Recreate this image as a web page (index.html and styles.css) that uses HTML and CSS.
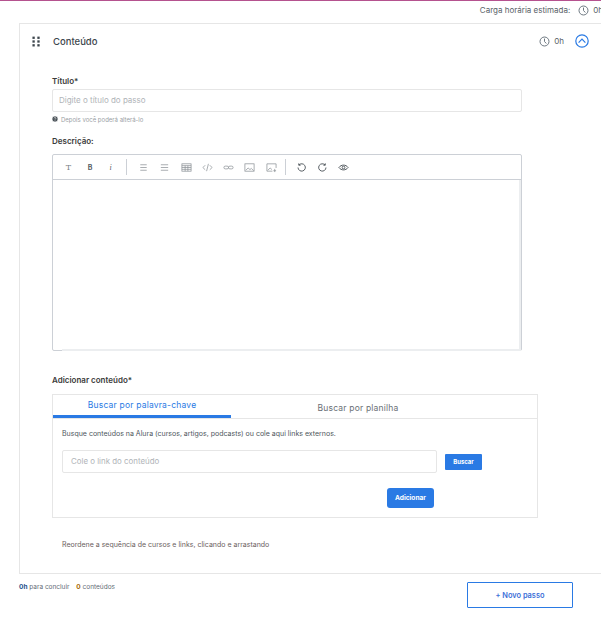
FILE: index.html
```html
<!DOCTYPE html>
<html lang="pt-BR">
<head>
<meta charset="utf-8">
<title>Conteúdo</title>
<link rel="stylesheet" href="styles.css">
</head>
<body>
<div class="page">
  <div class="estimate">
    <span>Carga horária estimada:</span>
    <svg class="clock" viewBox="0 0 12 12"><circle cx="6" cy="6" r="4.9"/><path d="M6 2.8V6l2 2.2"/></svg>
    <span>0h</span>
  </div>
  <section class="card">
    <header class="card-head">
      <svg class="grip" viewBox="0 0 9 12"><rect x="0.5" y="0.5" width="2.6" height="2.6"/><rect x="6" y="0.5" width="2.6" height="2.6"/><rect x="0.5" y="4.7" width="2.6" height="2.6"/><rect x="6" y="4.7" width="2.6" height="2.6"/><rect x="0.5" y="9" width="2.6" height="2.6"/><rect x="6" y="9" width="2.6" height="2.6"/></svg>
      <h2 class="card-title">Conteúdo</h2>
      <svg class="clock" viewBox="0 0 12 12"><circle cx="6" cy="6" r="4.9"/><path d="M6 2.8V6l2 2.2"/></svg>
      <span class="card-hours">0h</span>
      <svg class="toggle" viewBox="0 0 14 14"><circle cx="7" cy="7" r="6.2"/><path d="M3.6 8.6 7 5.2l3.4 3.4"/></svg>
    </header>
    <div class="form">
      <label class="label label-title">Título*</label>
      <div class="input">Digite o título do passo</div>
      <p class="hint">
        <svg class="hint-icon" viewBox="0 0 6 6"><circle cx="3" cy="3" r="3"/><path d="M2.1 2.3c0-1.1 1.8-1.1 1.8 0 0 .7-.9.7-.9 1.3M3 4.3v.6"/></svg>
        Depois você poderá alterá-lo
      </p>
      <label class="label label-desc">Descrição:</label>
      <div class="editor">
        <div class="toolbar">
          <span class="tool tool-t">T</span>
          <span class="tool tool-b">B</span>
          <span class="tool tool-i">i</span>
          <span class="sep"></span>
          <svg class="icon" viewBox="0 0 12 12"><path d="M2.5 3h7M2.5 6h7M2.5 9h7"/></svg>
          <svg class="icon" viewBox="0 0 12 12"><path d="M2 3h8M2 6h8M2 9h8"/></svg>
          <svg class="icon" viewBox="0 0 12 12"><rect x="1" y="2" width="10" height="8"/><path d="M1 4h10M1 6h10M1 8h10M4.500 4v6M7.500 4v6"/></svg>
          <svg class="icon" viewBox="0 0 12 12"><path d="M3.500 3.500 1 6l2.500 2.500M8.500 3.500 11 6 8.500 8.500M7 2 5 10"/></svg>
          <svg class="icon" viewBox="0 0 12 12"><rect x="1" y="4.500" width="5" height="3" rx="1.500"/><rect x="6" y="4.500" width="5" height="3" rx="1.500"/></svg>
          <svg class="icon" viewBox="0 0 12 12"><rect x="1" y="2" width="10" height="8"/><path d="m2 9 2.500-2.500 2 1.800L8 7l2.500 2.500"/></svg>
          <svg class="icon" viewBox="0 0 12 12"><path d="M11 6.500V2H1v8h6"/><path d="m2 9 2.500-2.500 2 1.800M9.500 7.500v3.500M8 9.500h3"/></svg>
          <span class="sep sep-2"></span>
          <svg class="icon icon-dark" viewBox="0 0 12 12"><path d="M3.200 3.300A4 4 0 1 1 2.200 6M3 1.500v2h2"/></svg>
          <svg class="icon icon-dark" viewBox="0 0 12 12"><path d="M8.800 3.300A4 4 0 1 0 9.800 6M9 1.500v2H7"/></svg>
          <svg class="icon icon-dark" viewBox="0 0 12 12"><path d="M1 6c2.500-3.500 7.500-3.500 10 0-2.500 3.500-7.500 3.500-10 0Z"/><circle cx="6" cy="6" r="1.500"/></svg>
        </div>
        <div class="editor-body"><div class="editor-area"></div></div>
      </div>
      <label class="label label-add">Adicionar conteúdo*</label>
      <div class="panel">
        <div class="tabs">
          <div class="tab tab-active">Buscar por palavra-chave</div>
          <div class="tab tab-plain">Buscar por planilha</div>
        </div>
        <div class="panel-body">
          <p class="panel-help">Busque conteúdos na Alura (cursos, artigos, podcasts) ou cole aqui links externos.</p>
          <div class="search-row">
            <div class="input input-link">Cole o link do conteúdo</div>
            <button class="btn btn-search">Buscar</button>
          </div>
          <div class="add-row"><button class="btn btn-add">Adicionar</button></div>
        </div>
      </div>
      <p class="reorder">Reordene a sequência de cursos e links, clicando e arrastando</p>
    </div>
  </section>
  <footer class="foot">
    <p class="foot-text"><b class="foot-h">0h</b> para concluir <b class="foot-n">0</b> conteúdos</p>
    <button class="btn-new">+ Novo passo</button>
  </footer>
</div>
</body>
</html>
```
FILE: styles.css
```css
html, body { margin: 0; padding: 0; background: #fff; }
body { font-family: Inter, "Liberation Sans", sans-serif; color: #3d464d; }
.page { width: 601px; height: 623px; overflow: hidden; border-top: 1px solid #b5528f; box-sizing: border-box; }
p, h2 { margin: 0; }
svg { display: block; flex: none; }

.estimate { height: 22px; width: 603px; display: flex; justify-content: flex-end; align-items: center; font-size: 8px; color: #5a6268; padding-bottom: 4px; box-sizing: border-box; }
.estimate .clock { margin: 0 4px 0 8px; }
.clock { width: 11px; height: 11px; fill: none; stroke: #5f6b75; stroke-width: 1; }

.card { margin-left: 19px; width: 640px; height: 551px; border: 1px solid #e6e6e6; box-sizing: border-box; }
.card-head { display: flex; align-items: center; height: 34px; padding-left: 12px; width: 557px; box-sizing: content-box; }
.grip { width: 8px; height: 11px; fill: #3d464d; }
.card-title { font-size: 9.5px; font-weight: 500; color: #3d464d; margin-left: 13px; flex: 1; }
.card-hours { font-size: 8px; color: #5a6268; margin: 0 11px 0 4px; }
.toggle { width: 14px; height: 14px; fill: none; stroke: #2a7ae4; stroke-width: 1.2; }

.form { margin-left: 32px; width: 486px; }
.label { display: block; font-size: 8px; font-weight: 600; color: #3a3a3a; line-height: 10px; }
.label-title { margin-top: 18px; }
.label-desc { margin-top: 13px; }
.label-add { margin-top: 24px; }
.input { width: 470px; height: 23px; box-sizing: border-box; border: 1px solid #e6e6e6; border-radius: 2px; margin-top: 3px; padding-left: 6px; font-size: 8px; line-height: 20px; color: #b0b4b8; }
.hint { display: flex; align-items: center; gap: 3px; font-size: 6px; color: #9aa0a5; margin-top: 3px; height: 8px; }
.hint-icon { width: 6px; height: 6px; fill: #4a5258; stroke: #fff; stroke-width: 0.6; }

.editor { width: 470px; height: 197px; margin-top: 8px; box-sizing: border-box; border: 1px solid #ccd0d6; border-radius: 2px; }
.toolbar { height: 24px; display: flex; align-items: center; border-bottom: 1px solid #ccd0d6; padding-left: 5px; }
.tool { width: 21px; text-align: center; font-size: 8px; color: #7a8086; font-family: "DejaVu Serif", serif; }
.tool-b { font-family: Inter, sans-serif; font-weight: 700; font-size: 7px; color: #5a6066; padding-left: 1px; box-sizing: border-box; }
.tool-i { font-family: "Liberation Serif", serif; font-style: italic; color: #5a6066; }
.sep { width: 1px; height: 16px; background: #ccd0d6; margin: 0 11px 0 5px; }
.sep-2 { margin: 0 9.5px 0 -2px; }
.icon { width: 11px; height: 11px; margin-right: 10.3px; fill: none; stroke: #8a9096; stroke-width: 0.8; }
.icon-dark { stroke: #4a5258; stroke-width: 1; }
.editor-body { height: 171px; }
.editor-area { height: 169px; border-right: 2px solid #eceef0; border-bottom: 2px solid #eceef0; margin-left: 9px; }

.panel { width: 486px; height: 124px; margin-top: 9px; box-sizing: border-box; border: 1px solid #e6e6e6; }
.tabs { display: flex; height: 23px; border-bottom: 1px solid #e6e6e6; }
.tab { text-align: center; font-size: 8.5px; font-weight: 400; color: #6a7076; letter-spacing: 0.2px; }
.tab-active { flex: none; width: 178px; height: 20px; color: #2a7ae4; border-bottom: 3px solid #2a7ae4; line-height: 20px; }
.tab-plain { flex: 1; padding-right: 52px; line-height: 25px; padding-top: 1px; }
.panel-body { padding: 0 9px; }
.panel-help { font-size: 7px; color: #4e565c; margin-top: 10px; line-height: 10px; }
.search-row { display: flex; align-items: center; gap: 8px; margin-top: 11px; }
.input-link { width: 375px; margin-top: 0; flex: none; padding-left: 8px; font-size: 7.9px; }
.btn { border: 0; color: #fff; background: #2a7ae4; font-family: inherit; font-weight: 700; padding: 0; }
.btn-search { width: 37px; height: 16px; font-size: 6px; border-radius: 1px; }
.add-row { margin-top: 15px; padding-left: 325px; }
.btn-add { width: 47px; height: 20px; font-size: 6.6px; border-radius: 3px; display: block; }
.reorder { font-size: 7px; color: #6b5e5e; margin: 22px 0 0 10px; line-height: 10px; }

.foot { display: flex; justify-content: space-between; padding-left: 19px; width: 573px; box-sizing: border-box; margin-top: 8px; }
.foot-text { font-size: 6.5px; color: #5f6b75; line-height: 10px; }
.foot-h { color: #1c4f8c; }
.foot-n { color: #a66a00; margin-left: 5px; }
.btn-new { width: 106px; height: 26px; background: #fff; border: 1px solid #2a7ae4; border-radius: 1px; color: #3d6fd8; font-family: inherit; font-size: 7.4px; font-weight: 600; padding: 0; }
```
